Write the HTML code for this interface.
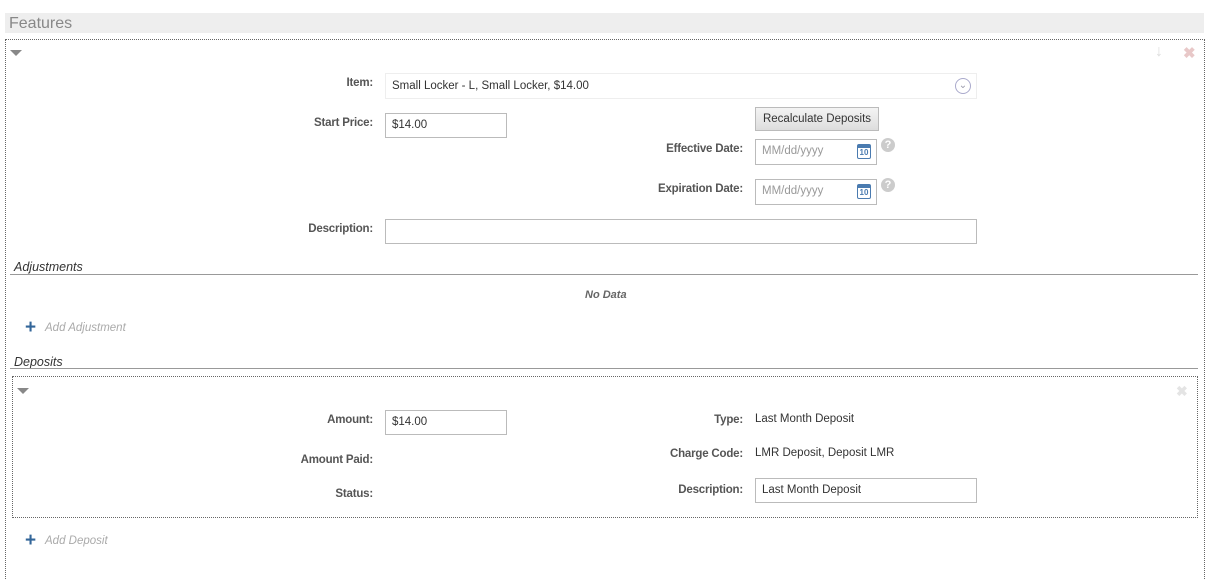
<!DOCTYPE html>
<html><head><meta charset="utf-8"><style>
*{box-sizing:border-box;margin:0;padding:0}
body{width:1217px;height:565px;overflow:hidden;background:#fff;font-family:"Liberation Sans",sans-serif;font-size:11.5px;color:#333;position:relative}
.a{position:absolute;white-space:nowrap}
.lbl{font-weight:bold;color:#555;text-align:right;line-height:14px;letter-spacing:-0.2px}
.inp{position:absolute;border:1px solid #bbb;background:#fff;padding-left:6px;line-height:23px;font-size:11.5px;color:#333}
.tri{position:absolute;width:0;height:0;border-left:6px solid transparent;border-right:6px solid transparent;border-top:6px solid #888}
.ph{color:#999}
.sec{position:absolute;left:14px;font-style:italic;color:#333;font-size:12.5px}
.line{position:absolute;left:10px;width:1188px;height:1px;background:#999}
.add{position:absolute;font-style:italic;color:#aaa;font-size:11.5px}
.plus{position:absolute;color:#336699;font-weight:bold;font-size:19px;line-height:14px}
.cal{position:absolute;width:14px;height:15px;border:1.5px solid #4a7bb0;border-top-width:4px;border-radius:2px;font-size:8px;font-weight:bold;color:#4a7bb0;text-align:center;line-height:9px}
.q{position:absolute;width:14px;height:14px;border-radius:7px;background:#ccc;color:#fff;font-weight:bold;font-size:11px;text-align:center;line-height:14px}
</style></head><body>
<div class="a" style="left:5px;top:13px;width:1199px;height:20px;background:#eee"></div>
<div class="a" style="left:9px;top:15px;font-size:16px;color:#888;line-height:18px">Features</div>
<div class="a" style="left:5px;top:39px;width:1200px;height:540px;border:1px dotted #666;border-bottom:none"></div>
<div class="tri" style="left:10px;top:50px"></div>
<div class="a" style="left:1155px;top:43px;color:#ddd;font-size:16px;font-weight:bold">&#8595;</div>
<div class="a" style="left:1183px;top:44px;color:#e8c8c8;font-size:15px;font-weight:bold">&#10006;</div>

<div class="a lbl" style="right:844px;top:76px">Item:</div>
<div class="inp" style="left:385px;top:73px;width:592px;height:26px;border-color:#eee;line-height:24px">Small Locker - L, Small Locker, $14.00</div>
<div class="a" style="left:955px;top:78px;width:16px;height:16px;border:1px solid #aac;border-radius:8px;color:#99a;font-size:10px;text-align:center;line-height:14px">&#8964;</div>

<div class="a lbl" style="right:844px;top:116px">Start Price:</div>
<div class="inp" style="left:385px;top:113px;width:122px;height:25px">$14.00</div>

<div class="a" style="left:755px;top:107px;width:124px;height:24px;border:1px solid #bbb;background:linear-gradient(#f4f4f4,#ddd);text-align:center;line-height:22px;color:#333">Recalculate Deposits</div>

<div class="a lbl" style="right:474px;top:142px">Effective Date:</div>
<div class="inp ph" style="left:755px;top:139px;width:122px;height:26px">MM/dd/yyyy</div>
<div class="cal" style="left:857px;top:144px">10</div>
<div class="q" style="left:881px;top:138px">?</div>

<div class="a lbl" style="right:474px;top:182px">Expiration Date:</div>
<div class="inp ph" style="left:755px;top:179px;width:122px;height:26px">MM/dd/yyyy</div>
<div class="cal" style="left:857px;top:184px">10</div>
<div class="q" style="left:881px;top:178px">?</div>

<div class="a lbl" style="right:844px;top:222px">Description:</div>
<div class="inp" style="left:385px;top:219px;width:592px;height:25px"></div>

<div class="sec" style="top:260px">Adjustments</div>
<div class="line" style="top:274px"></div>
<div class="a" style="left:585px;top:289px;font-style:italic;font-weight:bold;color:#666;font-size:11px">No Data</div>
<div class="plus" style="left:25px;top:321px">+</div>
<div class="add" style="left:45px;top:322px">Add Adjustment</div>

<div class="sec" style="top:355px">Deposits</div>
<div class="line" style="top:368px"></div>
<div class="a" style="left:12px;top:376px;width:1186px;height:142px;border:1px dotted #666"></div>
<div class="tri" style="left:17px;top:388px"></div>
<div class="a" style="left:1176px;top:383px;color:#e4e4e4;font-size:14px;font-weight:bold">&#10006;</div>

<div class="a lbl" style="right:844px;top:413px">Amount:</div>
<div class="inp" style="left:385px;top:410px;width:122px;height:25px">$14.00</div>
<div class="a lbl" style="right:844px;top:453px">Amount Paid:</div>
<div class="a lbl" style="right:844px;top:487px">Status:</div>

<div class="a lbl" style="right:474px;top:413px">Type:</div>
<div class="a" style="left:755px;top:413px">Last Month Deposit</div>
<div class="a lbl" style="right:474px;top:447px">Charge Code:</div>
<div class="a" style="left:755px;top:447px">LMR Deposit, Deposit LMR</div>
<div class="a lbl" style="right:474px;top:483px">Description:</div>
<div class="inp" style="left:755px;top:478px;width:222px;height:25px">Last Month Deposit</div>

<div class="plus" style="left:25px;top:534px">+</div>
<div class="add" style="left:45px;top:535px">Add Deposit</div>
</body></html>
